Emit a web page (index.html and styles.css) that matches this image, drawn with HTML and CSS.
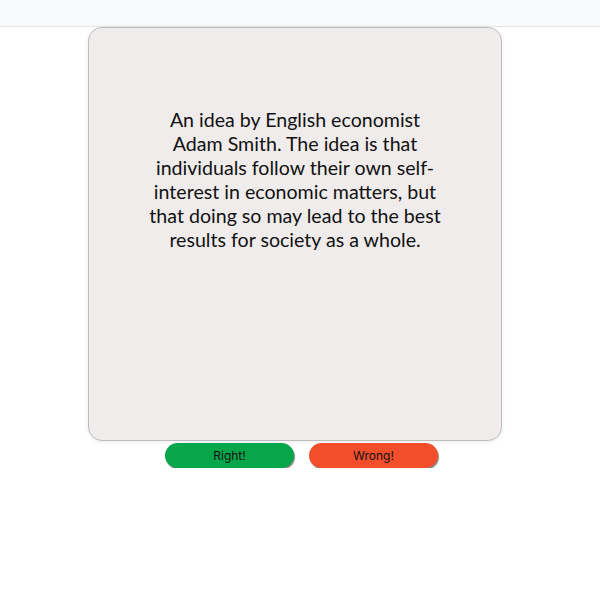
FILE: index.html
```html
<!DOCTYPE html>
<html>
<head>
<meta charset="utf-8">
<link rel="stylesheet" href="styles.css">
</head>
<body>
<div class="topbar"></div>
<main class="stage">
  <div class="card">
    <p class="card-text">An idea by English economist<br>Adam Smith. The idea is that<br>individuals follow their own self-<br>interest in economic matters, but<br>that doing so may lead to the best<br>results for society as a whole.</p>
  </div>
  <div class="actions">
    <button class="btn btn-right">Right!</button>
    <button class="btn btn-wrong">Wrong!</button>
  </div>
</main>
</body>
</html>
```
FILE: styles.css
```css
html, body {
  margin: 0;
  padding: 0;
  background: #ffffff;
}
body {
  font-family: "Lato", "Open Sans", sans-serif;
}
.topbar {
  height: 26px;
  background: #f8f9fa;
  border-bottom: 1px solid #e6e6e6;
}
.stage {
  display: flex;
  flex-direction: column;
  align-items: flex-start;
  padding-left: 88px;
}
.card {
  box-sizing: border-box;
  width: 414px;
  height: 414px;
  background: #f0ecec;
  border: 1px solid #bdbdbd;
  border-radius: 14px;
  box-shadow: 0 1px 4px rgba(0,0,0,0.08);
  padding-top: 80px;
}
.card-text {
  margin: 0;
  text-align: center;
  font-size: 19.6px;
  line-height: 24px;
  color: #111;
}
.actions {
  display: flex;
  gap: 15px;
  margin-top: 2px;
  padding-left: 77px;
}
.btn {
  width: 129px;
  height: 25px;
  border: none;
  border-radius: 13px;
  font-family: "Inter", "Roboto", sans-serif;
  font-size: 12px;
  color: #111;
  box-shadow: 1px 1.5px 1px #888;
  padding: 0;
}
.btn-right {
  background: #07a64a;
}
.btn-wrong {
  background: #f24e2c;
}
```
